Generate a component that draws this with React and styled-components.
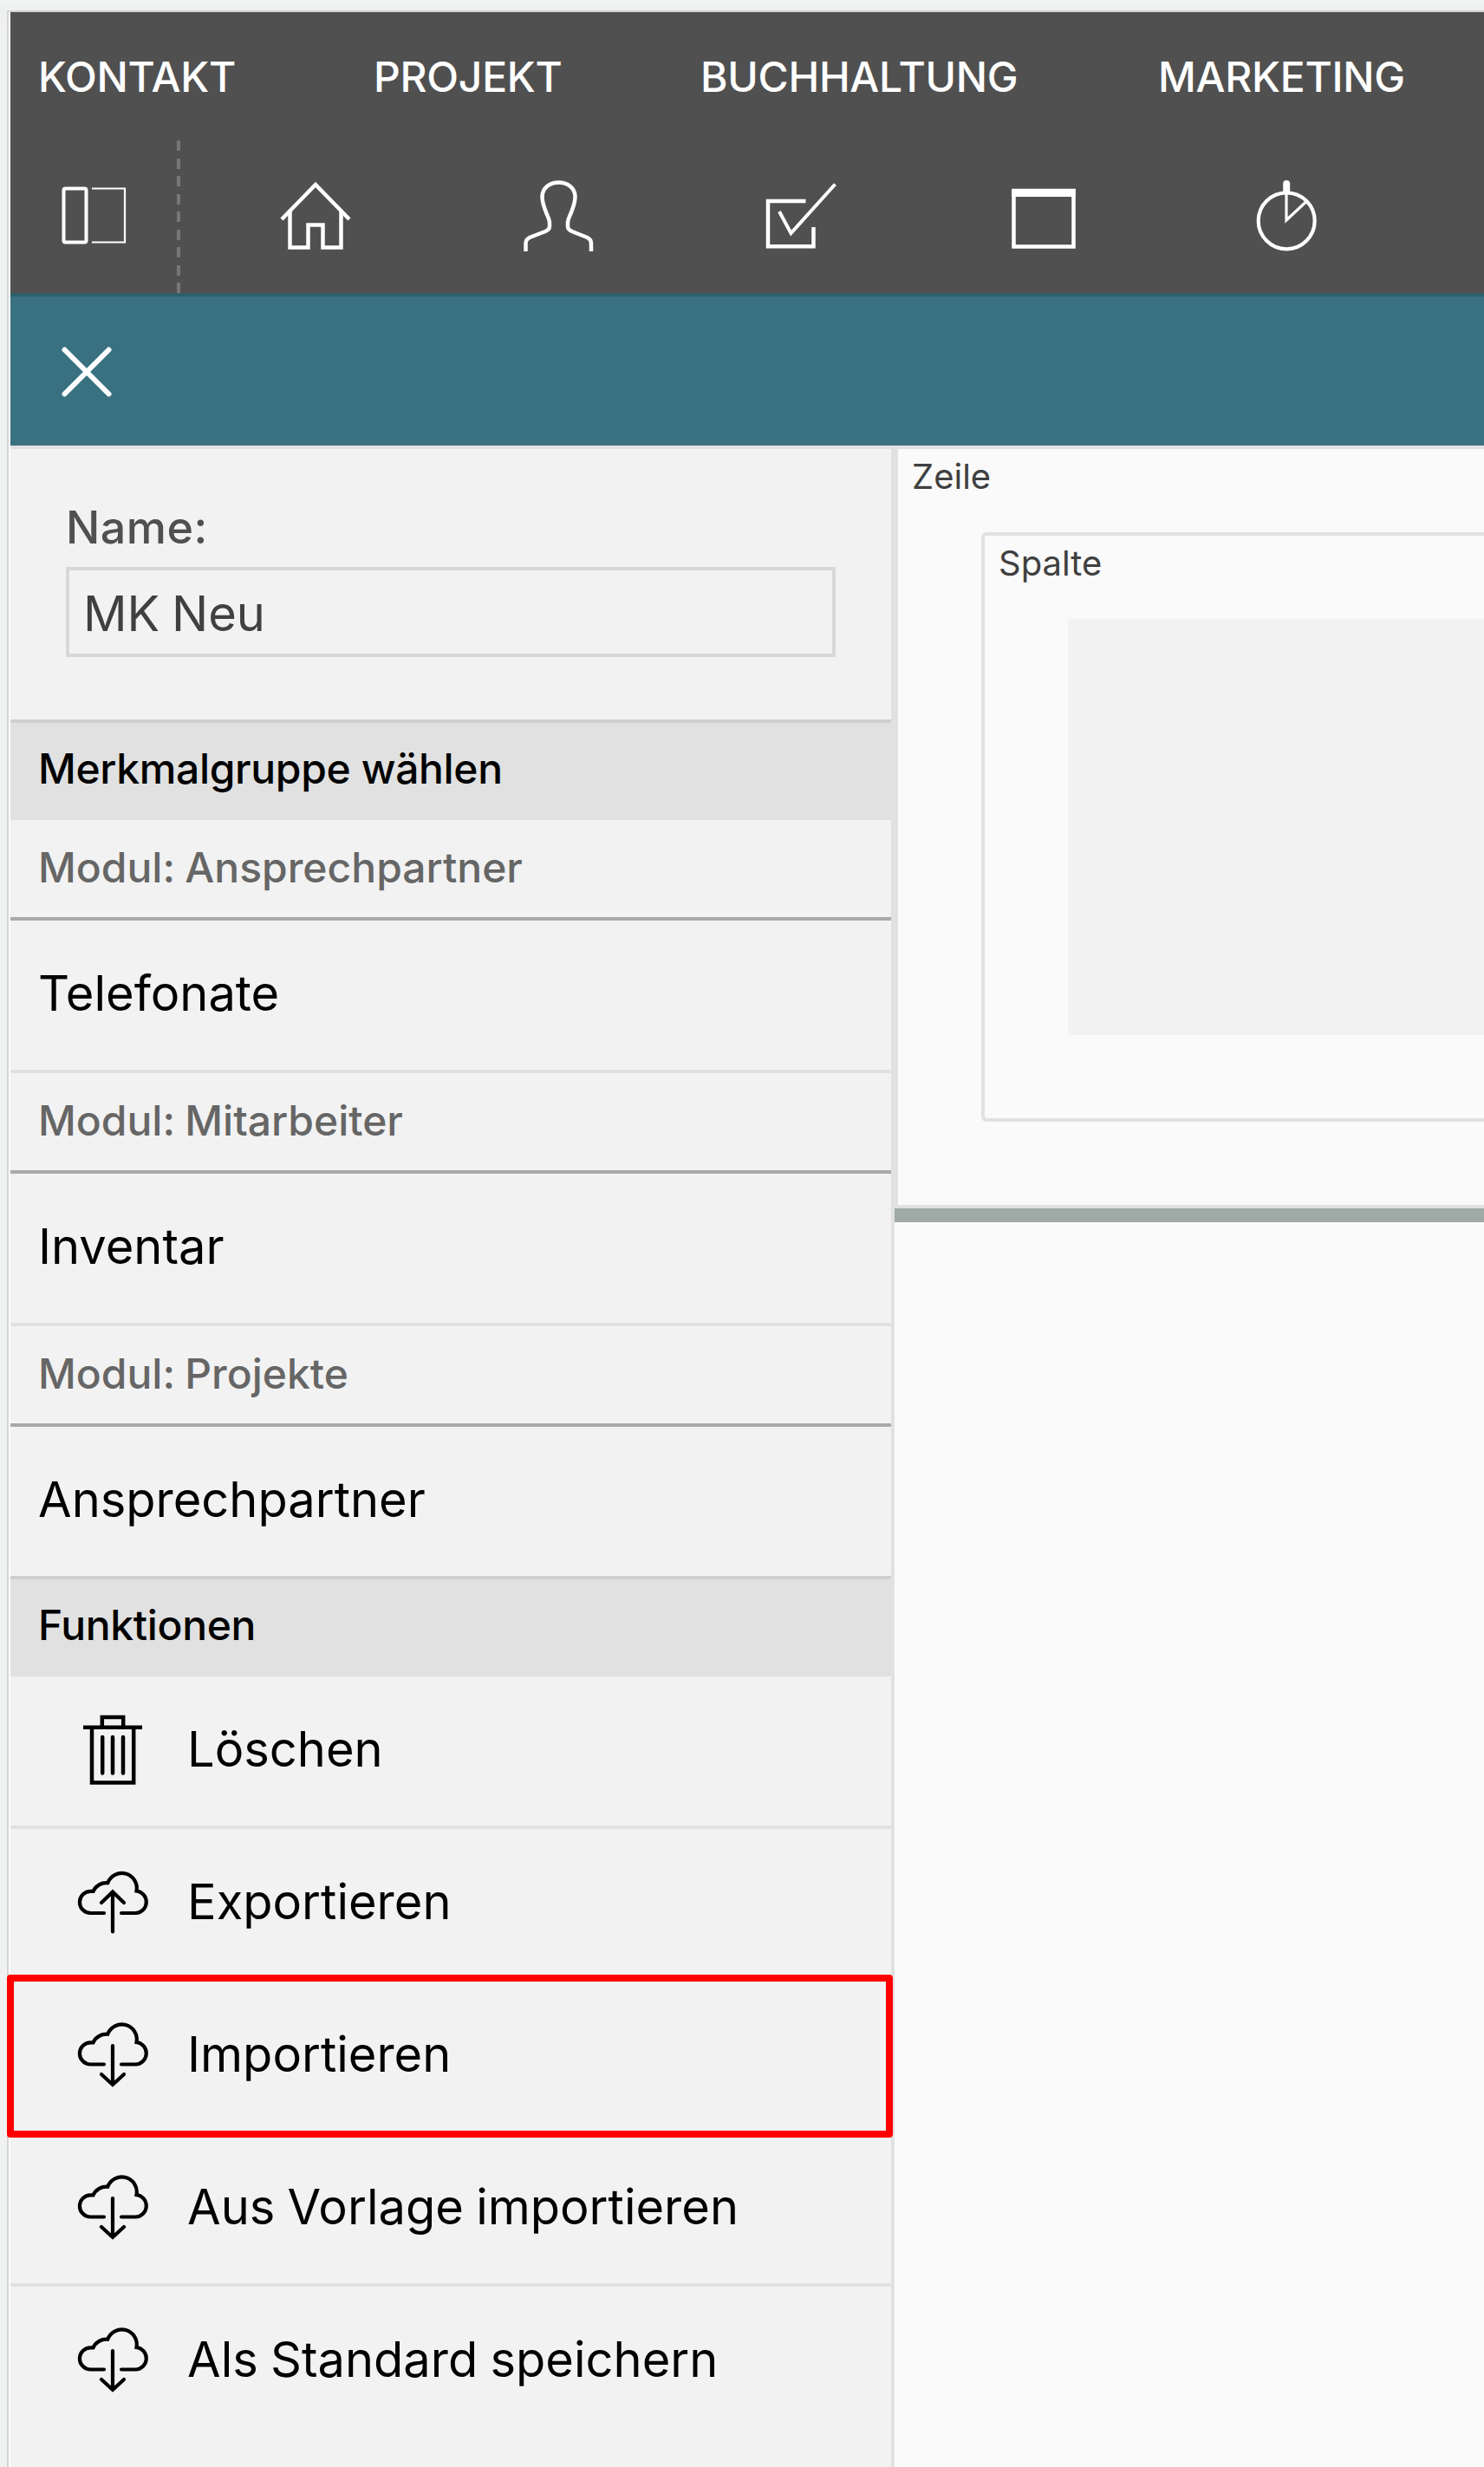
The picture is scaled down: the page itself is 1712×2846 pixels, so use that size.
import React from "react";
import styled, { createGlobalStyle } from "styled-components";

const Global = createGlobalStyle`
  * { box-sizing: border-box; }
  body { margin: 0; background: #f0f2f1; font-family: Inter, "Liberation Sans", sans-serif; }
`;

const Page = styled.div`
  height: 2846px;
  padding: 12px 0 0 8px;
  overflow: hidden;
  background: linear-gradient(#f2f4f3, #eeefef 12px, #f0f2f1 40px);
`;

const Window = styled.div`
  height: 2834px;
  border-top: 2px solid #d4d4d4;
  border-left: 2px solid #d4d4d4;
  padding-left: 2px;
  background: #fff;
  display: flex;
  flex-direction: column;
`;

const Header = styled.header`
  height: 324px;
  background: #505050;
  color: #fff;
  display: flex;
  flex-direction: column;
`;

const Menu = styled.nav`
  height: 148px;
  padding: 2px 0 0 32px;
  display: flex;
  align-items: center;
`;

const MenuItem = styled.a`
  width: ${(p) => p.$width}px;
  font-size: 48px;
  font-weight: 500;
  line-height: 60px;
  letter-spacing: -0.28px;
`;

const Tools = styled.div`
  flex: 1;
  display: flex;
`;

const ToolCell = styled.button`
  width: ${(p) => p.$width}px;
  padding: 0;
  border: 0;
  background: none;
  display: block;
`;

const Divider = styled.div`
  width: 4px;
  background: repeating-linear-gradient(#777 0 12px, transparent 12px 20.5px);
`;

const Icon = styled.svg`
  display: block;
  fill: none;
  stroke: currentColor;
  stroke-width: ${(p) => p.$stroke || 4.5};
  color: ${(p) => p.$color || "#fff"};
`;

const ActionBar = styled.div`
  height: 176px;
  border-top: 4px solid #2f5f6d;
  background: #3a7181;
`;

const Content = styled.div`
  flex: 1;
  display: flex;
  border-top: 4px solid #e1e1e1;
`;

const Sidebar = styled.aside`
  width: 1020px;
  flex: none;
  border-right: 4px solid #e1e1e1;
  background: #f2f2f2;
`;

const Form = styled.div`
  height: 312px;
  padding: 60px 64px 0;
`;

const Label = styled.label`
  display: block;
  height: 76px;
  line-height: 62px;
  color: #505050;
  font-size: 52px;
  font-weight: 500;
  letter-spacing: 0.5px;
`;

const Field = styled.div`
  height: 104px;
  border: 4px solid #d8d8d8;
  padding-left: 16px;
  line-height: 100px;
  font-size: 56px;
  word-spacing: -2px;
  color: #404040;
`;

const SectionTitle = styled.h2`
  height: 116px;
  margin: 0;
  padding-left: 32px;
  border-top: 4px solid #cfcfcf;
  background: #e1e1e1;
  color: #000;
  font-size: 48px;
  font-weight: 500;
  line-height: 106px;
  letter-spacing: -0.35px;
`;

const ModuleTitle = styled.h3`
  height: 116px;
  margin: 0;
  padding-left: 32px;
  border-bottom: 4px solid #a9a9a9;
  color: #666;
  font-size: 48px;
  font-weight: 500;
  line-height: 110px;
  word-spacing: -1.5px;
`;

const Row = styled.div`
  position: relative;
  height: ${(p) => (p.$last ? 172 : 176)}px;
  padding-left: 32px;
  border-bottom: ${(p) => (p.$last ? 0 : 4)}px solid #e1e1e1;
  display: flex;
  color: #000;
  font-size: 56px;
  line-height: 168px;
  word-spacing: -1.5px;
`;

const RowIcon = styled.span`
  width: 172px;
  height: 172px;
`;

const Highlight = styled.div`
  position: absolute;
  left: -4px;
  top: -8px;
  width: 1022px;
  height: 188px;
  border: 8px solid #f00;
  border-radius: 4px;
`;

const Canvas = styled.main`
  flex: 1;
  background: #fafafa;
`;

const LayoutRow = styled.section`
  height: 876px;
  border-left: 4px solid #e1e1e1;
  border-bottom: 4px solid #e1e1e1;
`;

const DropBar = styled.div`
  height: 16px;
  background: #9faaa7;
`;

const Caption = styled.div`
  height: 96px;
  padding-left: 16px;
  color: #404040;
  font-size: 40px;
  line-height: 64px;
`;

const LayoutColumn = styled.div`
  height: 680px;
  margin-left: 96px;
  border: 4px solid #e1e1e1;
  border-right: 0;
  border-radius: 6px 0 0 6px;
`;

const Slot = styled.div`
  height: 480px;
  margin-left: 96px;
  background: #f2f2f2;
`;

const PanelIcon = () => (
  <Icon width="192" height="176" $stroke={4}>
    <rect x="61.5" y="55.5" width="26" height="62" rx="2" />
    <path d="M94 55.5H132V117.5H94" strokeWidth="2.2" />
  </Icon>
);

const HomeIcon = () => (
  <Icon width="280" height="176">
    <path d="M117 91L156 51L195 91" />
    <path d="M126.5 82V123.5H147.5V97.5H164.5V123.5H185.5V82" />
  </Icon>
);

const UserIcon = () => (
  <Icon width="280" height="176">
    <path d="M118.5 128V119C118.5 116 120 113.5 123 112L141 105C144.5 103.5 146 102 146 99V95C146 91 143.5 87 142 83C139.5 76 137.5 72 137.5 65C137.5 55 146 48.5 156.5 48.5S175.5 55 175.5 65C175.5 72 173.5 76 171 83C169.5 87 167 91 167 95V99C167 102 168.5 103.5 172 105L189.5 112C192.5 113.5 194 116 194 119V128" />
  </Icon>
);

const TaskIcon = () => (
  <Icon width="280" height="176">
    <path d="M161.5 70H118V122.2H170.5V100" />
    <path d="M131 82L144.5 107L195.5 50.5" strokeWidth="4" />
  </Icon>
);

const CalendarIcon = () => (
  <Icon width="280" height="176">
    <rect x="121.5" y="58" width="69" height="64.5" />
    <path d="M119.3 60.5H192.7" strokeWidth="9" />
  </Icon>
);

const TimerIcon = () => (
  <Icon width="280" height="176" $stroke={4.2}>
    <circle cx="156.2" cy="92.8" r="32.5" />
    <path d="M156 58V92L178.5 71" strokeWidth="3.2" />
    <path d="M156.2 50V58" strokeWidth="8" strokeLinecap="round" />
  </Icon>
);

const CloseIcon = () => (
  <Icon width="176" height="172" $stroke={6}>
    <path d="M62.5 61.5L113.5 112.5M113.5 61.5L62.5 112.5" strokeLinecap="round" />
  </Icon>
);

const TrashIcon = () => (
  <Icon width="172" height="172" $color="#000">
    <path d="M52 58.8H120M73.8 57V47H98.2V57M62 59V122.5H110.2V59" />
    <path d="M74.2 70V111.5M86 70V111.5M98 70V111.5" strokeLinecap="round" />
  </Icon>
);

const Cloud = () => (
  <path d="M76 97H60.5A12.6 12.6 0 0 1 60.5 71.8H63.5A16.5 16.5 0 0 1 80.2 62.2A17.35 17.35 0 0 1 113.5 71.5A12.8 12.8 0 0 1 112.5 97H96" />
);

const UploadIcon = () => (
  <Icon width="172" height="172" $color="#000" $stroke={4.2} strokeLinecap="round">
    <Cloud />
    <path d="M86 118.5V73M73 85L86 72.5L99 85" />
  </Icon>
);

const DownloadIcon = () => (
  <Icon width="172" height="172" $color="#000" $stroke={4.2} strokeLinecap="round">
    <g transform="translate(0 -1.5)"><Cloud /></g>
    <path d="M86 74V118M73 107L86 119L99 107" />
  </Icon>
);

const menu = [
  ["KONTAKT", 387],
  ["PROJEKT", 377],
  ["BUCHHALTUNG", 528],
  ["MARKETING", 300],
];

const tools = [HomeIcon, UserIcon, TaskIcon, CalendarIcon, TimerIcon];

const modules = [
  ["Modul: Ansprechpartner", "Telefonate"],
  ["Modul: Mitarbeiter", "Inventar"],
  ["Modul: Projekte", "Ansprechpartner"],
];

const actions = [
  ["Löschen", TrashIcon],
  ["Exportieren", UploadIcon],
  ["Importieren", DownloadIcon, true],
  ["Aus Vorlage importieren", DownloadIcon],
  ["Als Standard speichern", DownloadIcon],
];

export default function App() {
  return (
    <Page>
      <Global />
      <Window>
        <Header>
          <Menu>
            {menu.map(([name, width]) => (
              <MenuItem key={name} $width={width}>{name}</MenuItem>
            ))}
          </Menu>
          <Tools>
            <ToolCell $width={192}><PanelIcon /></ToolCell>
            <Divider />
            {tools.map((Tool, i) => (
              <ToolCell key={i} $width={280}><Tool /></ToolCell>
            ))}
          </Tools>
        </Header>
        <ActionBar><CloseIcon /></ActionBar>
        <Content>
          <Sidebar>
            <Form>
              <Label>Name:</Label>
              <Field>MK Neu</Field>
            </Form>
            <SectionTitle>Merkmalgruppe wählen</SectionTitle>
            {modules.map(([title, entry], i) => (
              <React.Fragment key={title}>
                <ModuleTitle>{title}</ModuleTitle>
                <Row $last={i === modules.length - 1}>{entry}</Row>
              </React.Fragment>
            ))}
            <SectionTitle>Funktionen</SectionTitle>
            {actions.map(([name, ActionIcon, active], i) => (
              <Row key={name} $last={i === actions.length - 1}>
                <RowIcon><ActionIcon /></RowIcon>
                {name}
                {active && <Highlight />}
              </Row>
            ))}
          </Sidebar>
          <Canvas>
            <LayoutRow>
              <Caption>Zeile</Caption>
              <LayoutColumn>
                <Caption>Spalte</Caption>
                <Slot />
              </LayoutColumn>
            </LayoutRow>
            <DropBar />
          </Canvas>
        </Content>
      </Window>
    </Page>
  );
}
